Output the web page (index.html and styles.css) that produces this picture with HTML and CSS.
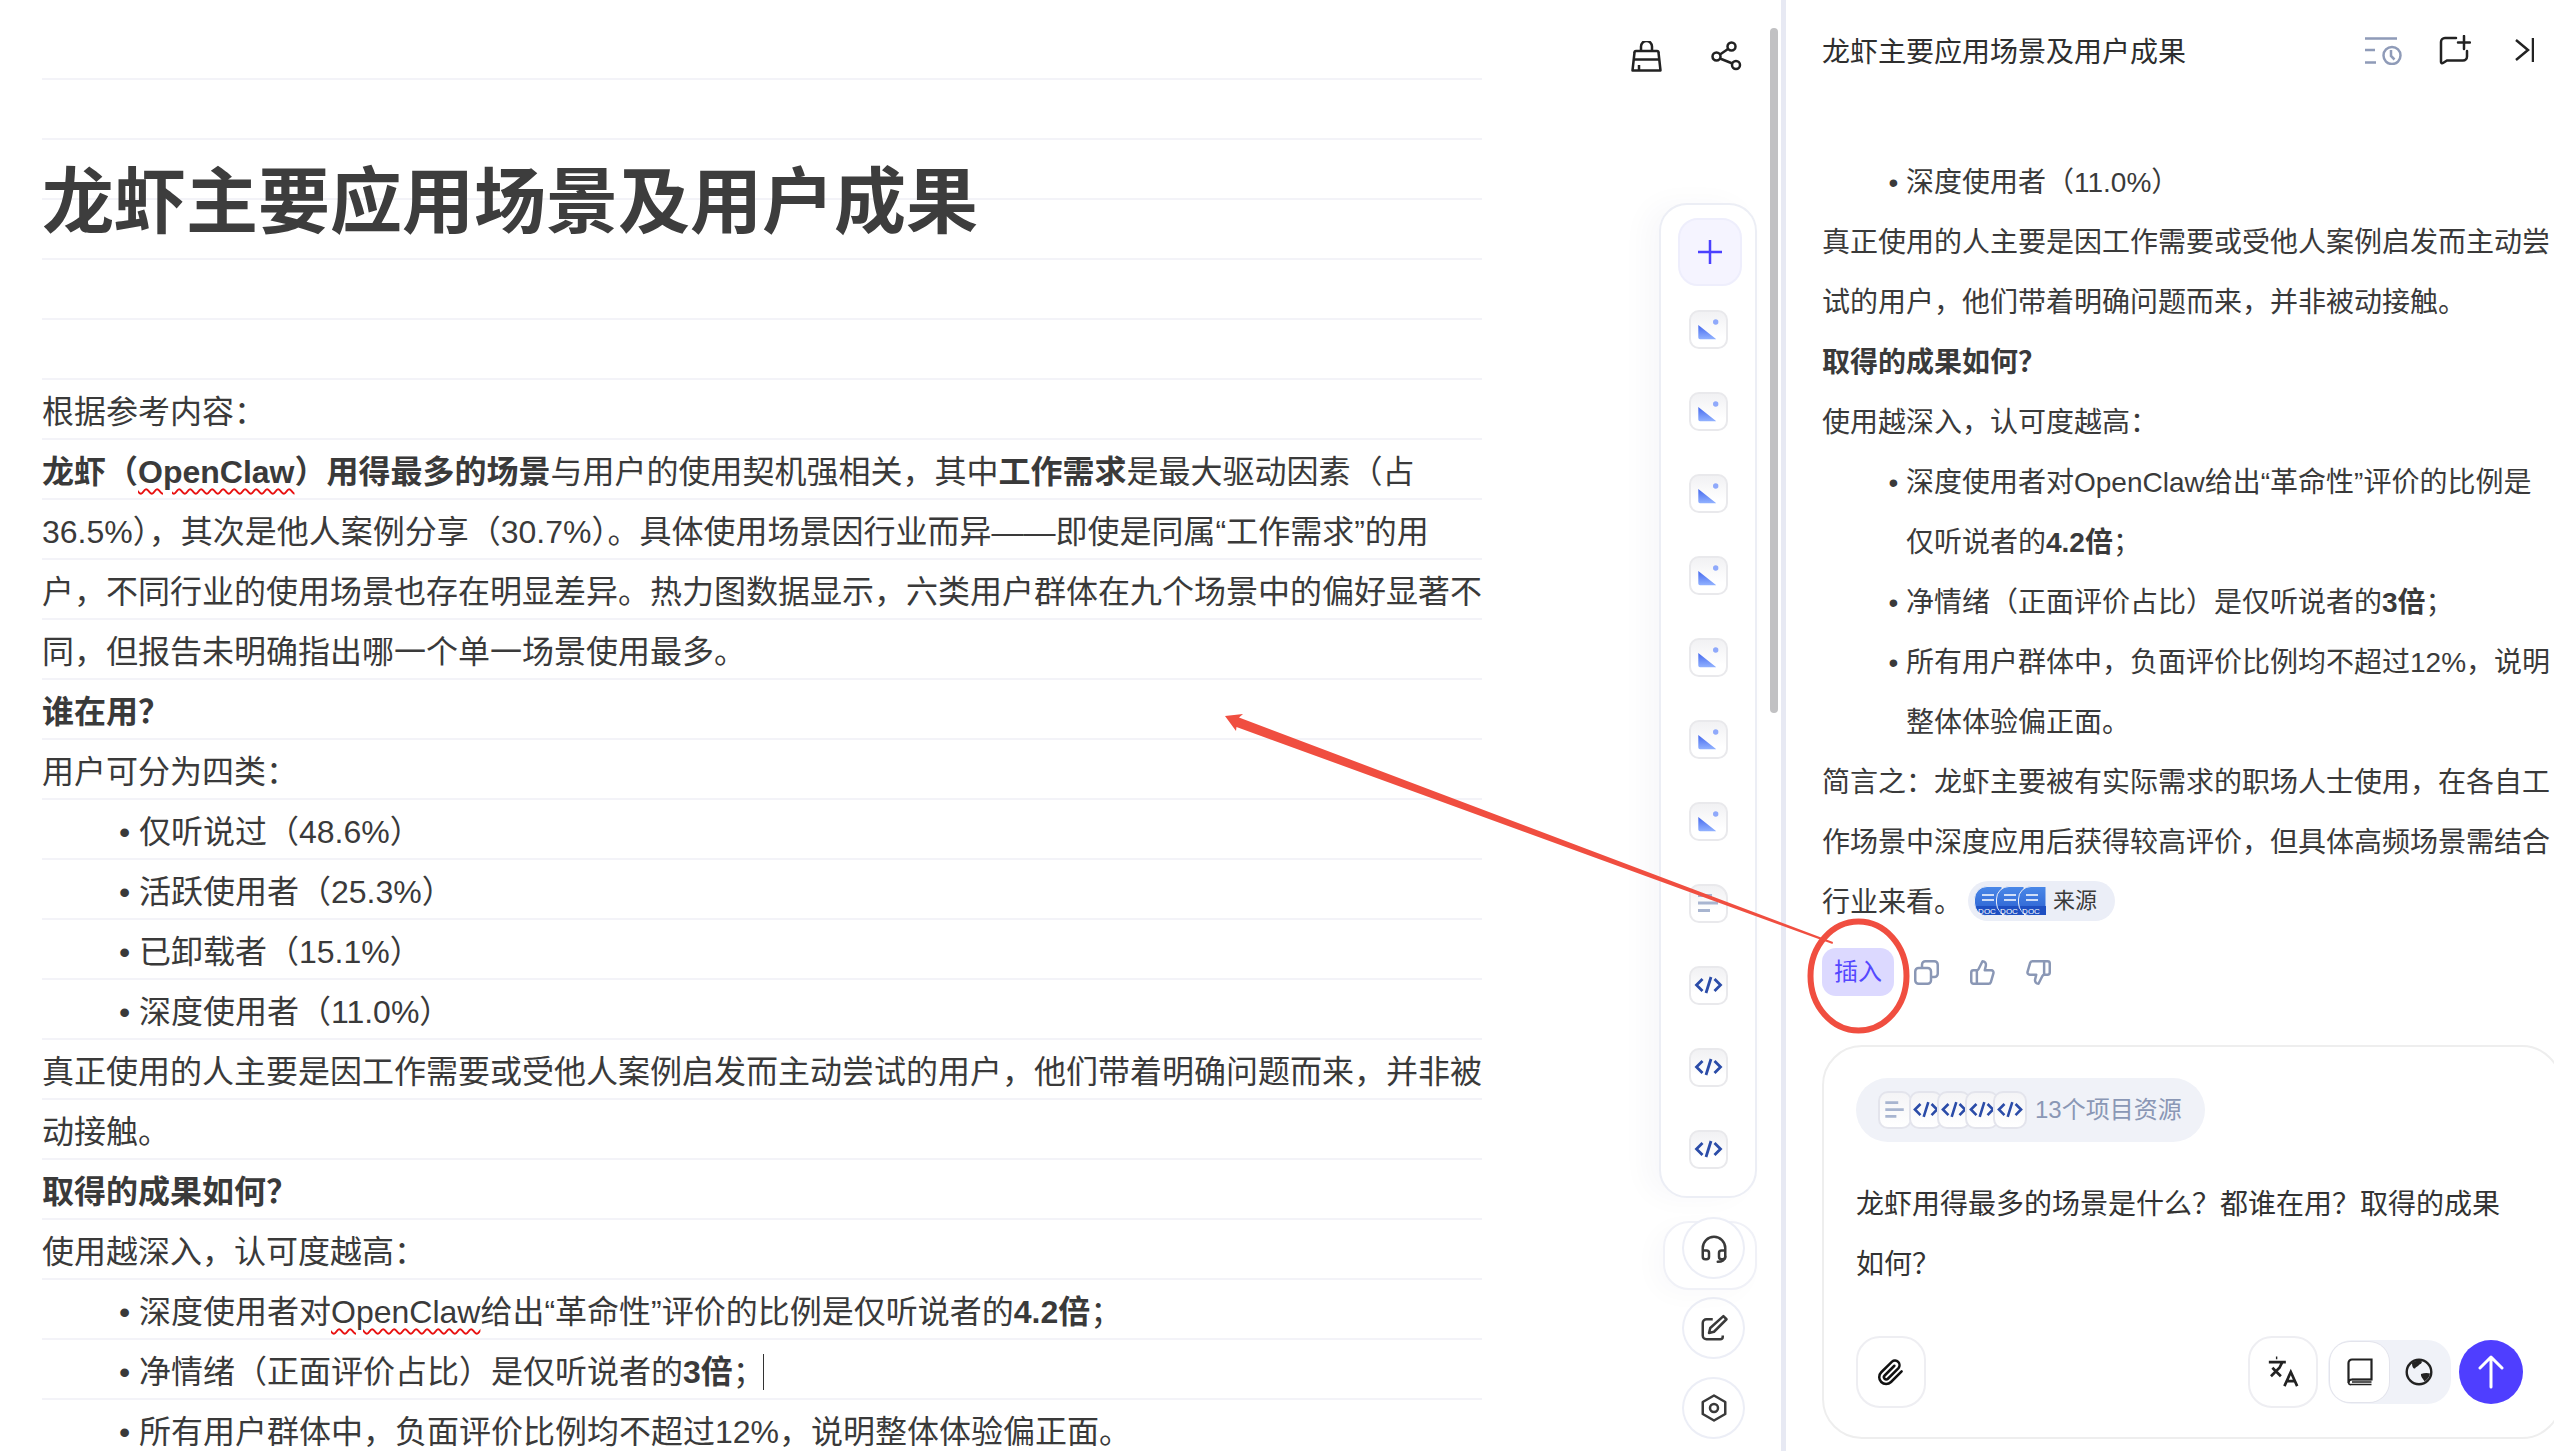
FILE: index.html
```html
<!DOCTYPE html>
<html lang="zh-CN">
<head>
<meta charset="utf-8">
<title>龙虾主要应用场景及用户成果</title>
<link rel="stylesheet" href="styles.css">
</head>
<body>
<svg class="defs" width="0" height="0" aria-hidden="true">
  <defs>
    <linearGradient id="imgGrad" x1="0" y1="0" x2="0" y2="1"><stop offset="0" stop-color="#4468ee"/><stop offset="1" stop-color="#92b2ff"/></linearGradient>
    <linearGradient id="docGrad" x1="0" y1="0" x2="0" y2="1"><stop offset="0" stop-color="#4a88e8"/><stop offset="1" stop-color="#2a5fd0"/></linearGradient>
    <symbol id="i-img" viewBox="0 0 39 39"><path d="M9.3 15 27.3 29.3H11a1.7 1.7 0 0 1-1.7-1.7z" fill="url(#imgGrad)"/><circle cx="26.7" cy="12" r="2.7" fill="#8fa9fb"/></symbol>
    <symbol id="i-code" viewBox="0 0 39 39"><path d="M13.5 13 7.5 19 13.5 25M25.5 13 31.5 19 25.500 25M22 11 17 27" fill="none" stroke="#2b4ca8" stroke-width="2.8"/></symbol>
    <symbol id="i-lines" viewBox="0 0 39 39"><path d="M9 11.5h14M9 19h20M9 26.500h12" fill="none" stroke="#a8b5d0" stroke-width="3"/></symbol>
    <symbol id="i-doc" viewBox="0 0 28 30"><path d="M13 .5H28V29.500H13A12.500 12.500 0 0 1 .5 17V13A12.500 12.500 0 0 1 13 .5z" fill="url(#docGrad)" stroke="#ebeef7"/><path d="M8 9h12M8 14h12" stroke="#fff" stroke-width="1.600"/><path d="M2 20H28V29H12A10 10 0 0 1 2 20z" fill="#1e4fc2"/><text x="13" y="28" text-anchor="middle" font-size="8" font-family="Liberation Sans" fill="#fff">DOC</text></symbol>
  </defs>
</svg>
<div class="app">
  <main class="main">
    <article class="doc">
      <h1 class="doc-title">龙虾主要应用场景及用户成果</h1>
      <p>根据参考内容：</p>
      <p><b>龙虾（<span class="typo">OpenClaw</span>）用得最多的场景</b>与用户的使用契机强相关，其中<b>工作需求</b>是最大驱动因素（占<br>36.5%），其次是他人案例分享（30.7%）。具体使用场景因行业而异——即使是同属“工作需求”的用<br>户，不同行业的使用场景也存在明显差异。热力图数据显示，六类用户群体在九个场景中的偏好显著不<br>同，但报告未明确指出哪一个单一场景使用最多。</p>
      <p><b>谁在用？</b></p>
      <p>用户可分为四类：</p>
      <ul>
        <li>仅听说过（48.6%）</li>
        <li>活跃使用者（25.3%）</li>
        <li>已卸载者（15.1%）</li>
        <li>深度使用者（11.0%）</li>
      </ul>
      <p>真正使用的人主要是因工作需要或受他人案例启发而主动尝试的用户，他们带着明确问题而来，并非被<br>动接触。</p>
      <p><b>取得的成果如何？</b></p>
      <p>使用越深入，认可度越高：</p>
      <ul>
        <li>深度使用者对<span class="typo">OpenClaw</span>给出“革命性”评价的比例是仅听说者的<b>4.2倍</b>；</li>
        <li>净情绪（正面评价占比）是仅听说者的<b>3倍</b>；<span class="caret"></span></li>
        <li>所有用户群体中，负面评价比例均不超过12%，说明整体体验偏正面。</li>
      </ul>
    </article>

    <aside class="tools">
      <div class="top-icons">
        <svg class="ic-31" viewBox="0 0 31 31" fill="none" stroke="#222" stroke-width="2.500"><path d="M10 10V5.500a5.500 5.500 0 0 1 11 0V10"/><path d="M5 10h21a1.500 1.500 0 0 1 1.500 1.500l2 18H1.500l2-18A1.500 1.500 0 0 1 5 10z" stroke-linejoin="round"/><path d="M3 18.500h25M8 24v5"/></svg>
        <svg class="ic-31" viewBox="0 0 31 31" fill="none" stroke="#222" stroke-width="2.500"><circle cx="20.500" cy="5.500" r="4"/><circle cx="5.500" cy="15.500" r="4"/><circle cx="25" cy="24" r="4"/><path d="M17 8 9 13.500M9 17.500l12.500 5"/></svg>
      </div>
      <div class="rail-card">
        <button class="rail-add"><svg width="26" height="26" viewBox="0 0 26 26" fill="none" stroke="#4a3fff" stroke-width="2.500"><path d="M13 1v24M1 13h24"/></svg></button>
        <div class="thumb"><svg><use href="#i-img"/></svg></div>
        <div class="thumb"><svg><use href="#i-img"/></svg></div>
        <div class="thumb"><svg><use href="#i-img"/></svg></div>
        <div class="thumb"><svg><use href="#i-img"/></svg></div>
        <div class="thumb"><svg><use href="#i-img"/></svg></div>
        <div class="thumb"><svg><use href="#i-img"/></svg></div>
        <div class="thumb"><svg><use href="#i-img"/></svg></div>
        <div class="thumb thumb-doc"><svg><use href="#i-lines"/></svg></div>
        <div class="thumb"><svg><use href="#i-code"/></svg></div>
        <div class="thumb"><svg><use href="#i-code"/></svg></div>
        <div class="thumb"><svg><use href="#i-code"/></svg></div>
      </div>
      <div class="help-pill">
        <button class="round-btn round-over"><svg class="ic-30" viewBox="0 0 24 24" fill="none" stroke="#3a3a3a" stroke-width="2"><path d="M3 14h3a2 2 0 0 1 2 2v3a2 2 0 0 1-2 2H5a2 2 0 0 1-2-2v-7a9 9 0 0 1 18 0v7a2 2 0 0 1-2 2h-1a2 2 0 0 1-2-2v-3a2 2 0 0 1 2-2h3"/><path d="M21 19c0 2.500-2.500 4-6 4" stroke-linecap="round"/></svg></button>
      </div>
      <button class="round-btn round-pen"><svg class="ic-30" viewBox="0 0 24 24" fill="none" stroke="#3a3a3a" stroke-width="2" stroke-linejoin="round"><path d="M11 5H6a3 3 0 0 0-3 3v10a3 3 0 0 0 3 3h11a2 2 0 0 0 2-2v-1"/><path d="M19.500 2.500 22 5 12 15l-4 1 1-4z"/></svg></button>
      <button class="round-btn round-hex"><svg class="ic-30" viewBox="0 0 24 24" fill="none" stroke="#3a3a3a" stroke-width="2" stroke-linejoin="round"><path d="M12 2 21 7.200V16.800L12 22 3 16.800V7.200z"/><circle cx="12" cy="12" r="3.200"/></svg></button>
    </aside>
    <div class="scroll-track"><div class="scroll-thumb"></div></div>
  </main>

  <section class="panel">
    <header class="panel-head">
      <h2 class="panel-title">龙虾主要应用场景及用户成果</h2>
      <div class="panel-actions">
        <svg class="ic-hist" viewBox="0 0 37 28" fill="none" stroke="#8f9bb8" stroke-width="2.500"><path d="M0 1.500h32M0 13h10M0 25.500h11"/><circle cx="27" cy="18.500" r="8.500"/><path d="M26 13v6l3.500 3.500"/></svg>
        <svg class="ic-new" viewBox="0 0 32 30" fill="none" stroke="#222" stroke-width="2.500" stroke-linecap="round"><path d="M17 3H6A4 4 0 0 0 2 7v20c0 1 1 1.600 2 1l4-2.500h16a4 4 0 0 0 4-4V16"/><path d="M25 1v13M19 7.500h12"/></svg>
        <svg class="ic-close" viewBox="0 0 19 24" fill="none" stroke="#222" stroke-width="2.500"><path d="M1 2 13 12 1 22M18 0v24"/></svg>
      </div>
    </header>
    <div class="answer">
      <ul class="panel-list"><li>深度使用者（11.0%）</li></ul>
      <p>真正使用的人主要是因工作需要或受他人案例启发而主动尝<br>试的用户，他们带着明确问题而来，并非被动接触。</p>
      <p><b>取得的成果如何？</b></p>
      <p>使用越深入，认可度越高：</p>
      <ul class="panel-list">
        <li>深度使用者对OpenClaw给出“革命性”评价的比例是<br>仅听说者的<b>4.2倍</b>；</li>
        <li>净情绪（正面评价占比）是仅听说者的<b>3倍</b>；</li>
        <li>所有用户群体中，负面评价比例均不超过12%，说明<br>整体体验偏正面。</li>
      </ul>
      <p>简言之：龙虾主要被有实际需求的职场人士使用，在各自工<br>作场景中深度应用后获得较高评价，但具体高频场景需结合<br>行业来看。<span class="source-chip"><span class="doc-stack"><svg><use href="#i-doc"/></svg><svg><use href="#i-doc"/></svg><svg><use href="#i-doc"/></svg></span>来源</span></p>
    </div>
    <div class="answer-actions">
      <button class="insert-btn">插入</button>
      <svg class="ic-act" viewBox="0 0 24 24" fill="none" stroke="#8a97b5" stroke-width="2.200"><rect x="2" y="8" width="14" height="14" rx="3"/><path d="M8 8V5a3 3 0 0 1 3-3h8a3 3 0 0 1 3 3v8a3 3 0 0 1-3 3h-3"/></svg>
      <svg class="ic-act" viewBox="0 0 24 24" fill="none" stroke="#8a97b5" stroke-width="2.200" stroke-linejoin="round"><path d="M7 10v12"/><path d="M15 5.880 14 10h5.830a2 2 0 0 1 1.920 2.560l-2.330 8A2 2 0 0 1 17.500 22H4a2 2 0 0 1-2-2v-8a2 2 0 0 1 2-2h2.760a2 2 0 0 0 1.790-1.110L12 2a3.130 3.130 0 0 1 3 3.880z"/></svg>
      <svg class="ic-act" viewBox="0 0 24 24" fill="none" stroke="#8a97b5" stroke-width="2.200" stroke-linejoin="round"><path d="M17 14V2"/><path d="M9 18.120 10 14H4.170a2 2 0 0 1-1.920-2.560l2.330-8A2 2 0 0 1 6.500 2H20a2 2 0 0 1 2 2v8a2 2 0 0 1-2 2h-2.760a2 2 0 0 0-1.790 1.110L12 22a3.130 3.130 0 0 1-3-3.880z"/></svg>
    </div>
    <div class="composer">
      <div class="res-pill">
        <span class="res-stack">
          <span class="res-item res-first"><svg><use href="#i-lines"/></svg></span>
          <span class="res-item"><svg><use href="#i-code"/></svg></span>
          <span class="res-item"><svg><use href="#i-code"/></svg></span>
          <span class="res-item"><svg><use href="#i-code"/></svg></span>
          <span class="res-item"><svg><use href="#i-code"/></svg></span>
        </span>
        <span class="res-label">13个项目资源</span>
      </div>
      <p class="prompt">龙虾用得最多的场景是什么？都谁在用？取得的成果<br>如何？</p>
      <div class="composer-bar">
        <button class="sq-btn"><svg class="ic-30" viewBox="0 0 24 24" fill="none" stroke="#111" stroke-width="2" stroke-linecap="round"><path d="M20.500 11.500 12 20a5.500 5.500 0 0 1-7.800-7.800l8.600-8.500a3.700 3.700 0 0 1 5.200 5.200l-8.500 8.500a1.800 1.800 0 0 1-2.600-2.600l7.800-7.800"/></svg></button>
        <div class="bar-right">
          <button class="sq-btn"><svg class="ic-34" viewBox="0 0 24 24" fill="none" stroke="#222" stroke-width="1.900"><path d="m4.500 9 6 6M3.500 15l6-6 2-4M2 5h12M7 2h1"/><path d="m22 22-4.500-10L13 22M14.500 18.500h6"/></svg></button>
          <div class="mode-seg">
            <button class="mode-on"><svg class="ic-28" viewBox="0 0 26 28" fill="none" stroke="#222" stroke-width="2.200"><path d="M5 1.500h19.500v20H5a3.500 3.500 0 0 0-3.500 3.500V5A3.500 3.500 0 0 1 5 1.500z"/><path d="M5 21.500h19.500M1.500 25A2 2 0 0 0 4 26.500h20.500M5 24h19.500" stroke-width="1.600"/></svg></button>
            <button class="mode-off"><svg class="ic-28" viewBox="0 0 28 28"><circle cx="14" cy="14" r="12.300" fill="none" stroke="#222" stroke-width="2.400"/><path d="M7 5c3-2.500 7-3 10-1.500 0 2-2 2.500-3 3.500-1 2-3.500 1.500-4 3.500C8 11 7 8 7 5zM16 16c3-1 6-1.500 9-.5-.5 3-2.500 6-5.500 8-1-2.500-4-4.500-3.500-7.500z" fill="#222"/></svg></button>
          </div>
          <button class="send-btn"><svg width="30" height="34" viewBox="0 0 30 34" fill="none" stroke="#fff" stroke-width="3" stroke-linecap="round" stroke-linejoin="round"><path d="M15 2v30M4 13 15 2l11 11"/></svg></button>
        </div>
      </div>
    </div>
  </section>
</div>

<svg class="annotation" viewBox="0 0 2554 1451" aria-hidden="true">
  <polygon fill="#f04e40" points="1225,716 1243,714 1239,717.500 1833,942 1832.500,944 1236.500,727 1236,731"/>
  <ellipse cx="1858.500" cy="976" rx="48" ry="54.500" fill="none" stroke="#f04e40" stroke-width="6"/>
</svg>
</body>
</html>
```
FILE: styles.css
```css
* { box-sizing: border-box; }
html, body { margin: 0; padding: 0; }
body {
  width: 2554px;
  height: 1451px;
  overflow: hidden;
  position: relative;
  background: #fff;
  color: #3a3a3a;
  font-family: "Liberation Sans", "Noto Sans CJK SC", sans-serif;
}
button { padding: 0; margin: 0; font: inherit; cursor: pointer; }
svg { display: block; }
.defs { position: absolute; }

.app { display: flex; height: 1451px; overflow: hidden; }

/* document */
.main { width: 1781px; flex: none; display: flex; align-items: flex-start; padding-left: 42px; }
.doc {
  width: 1440px;
  flex: none;
  height: 1373px;
  margin-top: 78px;
  padding-top: 64px;
  overflow: hidden;
  font-size: 32px;
  line-height: 60px;
  white-space: nowrap;
  background-image: repeating-linear-gradient(to bottom, #f3f3f8 0, #f3f3f8 2px, transparent 2px, transparent 60px);
}
.doc-title { margin: 0 0 120px; font-size: 72px; line-height: 120px; font-weight: 700; color: #3d3d3d; }
.doc p { margin: 0; }
.doc ul { margin: 0; padding: 0 0 0 97px; list-style: none; }
.doc li, .panel-list li { display: list-item; list-style-type: "• "; }
.typo { text-decoration: underline wavy #e81010 2px; text-underline-offset: 5px; }
b { font-weight: 700; }
.caret { display: inline-block; width: 1px; height: 36px; margin-left: -2px; background: #333; vertical-align: -7px; }

/* tool rail */
.tools { width: 126px; margin-left: 149px; flex: none; display: flex; flex-direction: column; align-items: flex-end; padding-top: 41px; }
.top-icons { width: 100%; display: flex; gap: 49px; }
.ic-31 { width: 31px; height: 31px; }
.ic-28 { width: 28px; height: 28px; }
.ic-30 { width: 30px; height: 30px; }
.ic-34 { width: 34px; height: 34px; }
.rail-card {
  width: 98px;
  margin-top: 131px;
  padding: 13px 0 27px;
  display: flex;
  flex-direction: column;
  align-items: center;
  gap: 43px;
  border: 2px solid #eceef5;
  border-radius: 28px;
  background: #fff;
  box-shadow: -14px 0 28px rgba(40, 40, 90, .03);
}
.rail-add {
  width: 64px;
  height: 68px;
  margin: 0 0 -19px 4px;
  display: flex;
  align-items: center;
  justify-content: center;
  background: #f5f4ff;
  border: 2px solid #eeeefc;
  border-radius: 20px;
}
.thumb {
  width: 39px;
  height: 39px;
  border: 2px solid #e9e9ec;
  border-radius: 10px;
  background: linear-gradient(#f1f1f3, #fff 70%);
  overflow: hidden;
}
.thumb svg { width: 39px; height: 39px; margin: -2px; }
.thumb-doc { border-top-right-radius: 14px; }

.help-pill {
  width: 94px;
  height: 69px;
  margin-top: 23px;
  border: 2px solid #f0f1f7;
  border-radius: 26px;
  position: relative;
  box-shadow: -10px 6px 24px rgba(40, 40, 90, .025);
}
.round-btn {
  width: 63px;
  height: 62px;
  display: flex;
  align-items: center;
  justify-content: center;
  background: #fff;
  border: 2px solid #eceef6;
  border-radius: 50%;
}
.round-over { position: absolute; left: 17px; top: -6px; }
.round-pen { margin: 7px 12px 0 0; }
.round-hex { margin: 18px 12px 0 0; }

.scroll-track { width: 8px; margin: 28px 0 0 13px; flex: none; }
.scroll-thumb { height: 685px; background: #c1c1c3; border-radius: 4px; }

/* right panel */
.panel {
  width: 773px;
  flex: none;
  height: 1451px;
  border-left: 5px solid #e7e9f3;
  padding-left: 36px;
  overflow: hidden;
  font-size: 28px;
  line-height: 60px;
  white-space: nowrap;
}
.panel-head { height: 151px; padding-top: 23px; display: flex; align-items: flex-start; }
.panel-title { margin: 0; font-size: 28px; line-height: 60px; font-weight: 400; color: #2e2e2e; width: 543px; }
.panel-actions { display: flex; align-items: flex-start; margin-top: -3px; }
.ic-hist { width: 37px; height: 28px; margin-top: 17px; }
.ic-new { width: 32px; height: 30px; margin: 15px 0 0 37px; }
.ic-close { width: 19px; height: 24px; margin: 18px 0 0 44px; }
.answer { padding-top: 2px; }
.answer p { margin: 0; }
.panel-list { margin: 0; padding: 0 0 0 84px; list-style: none; }
.source-chip {
  display: inline-flex;
  align-items: center;
  height: 40px;
  margin-left: 6px;
  padding: 0 18px 0 6px;
  border-radius: 20px;
  background: #ebeef7;
  font-size: 22px;
  line-height: 40px;
  vertical-align: -4px;
  color: #3a3a3a;
}
.doc-stack { display: flex; margin-right: 7px; }
.doc-stack svg { width: 28px; height: 30px; margin-right: -6px; }
.doc-stack svg:last-child { margin-right: 0; }
.answer-actions { display: flex; align-items: center; height: 48px; margin-top: 15px; }
.insert-btn {
  width: 72px;
  height: 48px;
  margin-right: 19px;
  border: 0;
  border-radius: 14px;
  background: #dcd9ff;
  color: #5548ff;
  font-size: 24px;
  line-height: 48px;
}
.ic-act { width: 27px; height: 27px; margin-right: 29px; }

.composer {
  width: 740px;
  height: 394px;
  margin: 49px 0 0 0;
  padding: 31px 0 0 32px;
  border: 2px solid #eeeeee;
  border-radius: 40px;
}
.res-pill {
  display: inline-flex;
  align-items: center;
  height: 64px;
  padding: 0 23px 0 22px;
  border-radius: 32px;
  background: #f0f2f8;
}
.res-stack { display: flex; margin-right: 8px; }
.res-item {
  width: 34px;
  height: 38px;
  margin-right: -6px;
  display: flex;
  align-items: center;
  justify-content: center;
  background: linear-gradient(#f4f4f6, #fff);
  border: 2px solid #e3e4ec;
  border-radius: 10px;
  overflow: hidden;
}
.res-first { margin-right: -3px; }
.res-item:last-child { margin-right: 0; }
.res-item svg { width: 36px; height: 36px; flex: none; }
.res-label { font-size: 24px; line-height: 38px; color: #8a97b5; }
.prompt { margin: 26px 0 0; line-height: 60px; color: #333; }
.composer-bar { display: flex; justify-content: space-between; align-items: center; margin-top: 41px; padding-right: 37px; }
.bar-right { display: flex; align-items: center; gap: 10px; }
.sq-btn {
  width: 70px;
  height: 72px;
  display: flex;
  align-items: center;
  justify-content: center;
  background: #fff;
  border: 2px solid #eeeef2;
  border-radius: 24px;
}
.mode-seg { width: 123px; height: 64px; display: flex; align-items: center; padding-left: 2px; background: #f0f2f8; border-radius: 24px; }
.mode-seg button { height: 60px; display: flex; align-items: center; justify-content: center; border: 0; background: none; }
.mode-seg .mode-on { width: 59px; background: #fff; border-radius: 20px; box-shadow: 0 0 0 1px #e3e4ec; }
.mode-seg .mode-off { width: 60px; }
.send-btn { width: 64px; height: 64px; margin-left: -2px; display: flex; align-items: center; justify-content: center; border: 0; border-radius: 50%; background: #4f3eff; }

/* hand-drawn annotation over the screenshot */
.annotation { position: absolute; left: 0; top: 0; width: 2554px; height: 1451px; pointer-events: none; }
```
